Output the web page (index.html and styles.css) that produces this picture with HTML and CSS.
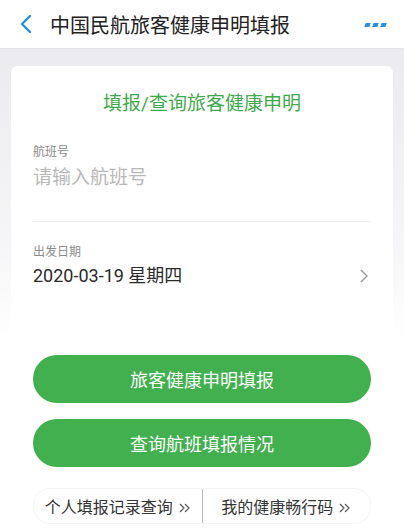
FILE: index.html
```html
<!DOCTYPE html>
<html>
<head>
    <meta charset="utf-8">
    <title>中国民航旅客健康申明填报</title>
    <link rel="stylesheet" href="styles.css">
</head>
<body>
    <div class="header">
        <svg class="back" width="14" height="20" viewBox="0 0 14 20">
            <path d="M11 2 L3 10 L11 18" fill="none" stroke="#2b8fd8" stroke-width="2.4" stroke-linecap="round" stroke-linejoin="round"/>
        </svg>
        <div class="header-title">中国民航旅客健康申明填报</div>
        <div class="more">
            <span></span><span></span><span></span>
        </div>
    </div>
    <div class="page">
        <div class="card">
            <div class="card-title">填报/查询旅客健康申明</div>
            <div class="field">
                <div class="label">航班号</div>
                <div class="placeholder">请输入航班号</div>
            </div>
            <div class="field field-date">
                <div>
                    <div class="label">出发日期</div>
                    <div class="value">2020-03-19 星期四</div>
                </div>
                <svg class="arrow" width="10" height="16" viewBox="0 0 10 16">
                    <path d="M2 2 L8 8 L2 14" fill="none" stroke="#999" stroke-width="1.4"/>
                </svg>
            </div>
        </div>
        <div class="actions">
            <button class="btn">旅客健康申明填报</button>
            <button class="btn">查询航班填报情况</button>
        </div>
        <div class="links">
            <div class="link">个人填报记录查询
                <svg class="dbl" width="12" height="10" viewBox="0 0 12 10">
                    <path d="M1 1 L5 5 L1 9 M6 1 L10 5 L6 9" fill="none" stroke="#555" stroke-width="1.2"/>
                </svg>
            </div>
            <div class="sep"></div>
            <div class="link">我的健康畅行码
                <svg class="dbl" width="12" height="10" viewBox="0 0 12 10">
                    <path d="M1 1 L5 5 L1 9 M6 1 L10 5 L6 9" fill="none" stroke="#555" stroke-width="1.2"/>
                </svg>
            </div>
        </div>
    </div>
</body>
</html>
```

FILE: styles.css
```css
body {
    margin: 0;
    padding: 0;
    font-family: Roboto, "Noto Sans CJK SC", sans-serif;
    background-color: #fff;
    color: #222;
}

.header {
    display: flex;
    align-items: center;
    height: 48px;
    padding: 0 18px 0 19px;
    background-color: #fff;
    border-bottom: 1px solid #e4e4e8;
}

.back {
    margin-right: 17px;
}

.header-title {
    flex: 1;
    font-size: 20px;
    color: #222;
}

.more {
    display: flex;
    gap: 3px;
    margin-top: 2px;
}

.more span {
    width: 5px;
    height: 4px;
    background-color: #2b8fd8;
    transform: skewX(-20deg);
}

.page {
    background: linear-gradient(to bottom, #ebebef 0px, #f6f6f8 200px, #fff 290px);
    padding: 17px 11px 0 11px;
}

.card {
    background-color: #fff;
    border-radius: 7px;
    padding: 0 22px;
    height: 269px;
}

.card-title {
    text-align: center;
    color: #3fa94c;
    font-size: 19px;
    padding-top: 22px;
    height: 36px;
}

.field {
    padding: 19px 0 26px 0;
    border-bottom: 1px solid #f0f0f0;
}

.field-date {
    display: flex;
    justify-content: space-between;
    align-items: center;
    border-bottom: none;
    padding-top: 21px;
}

.label {
    font-size: 12px;
    color: #8a8a8a;
    line-height: 18px;
}

.placeholder {
    font-size: 19px;
    color: #b8b8b8;
    line-height: 34px;
}

.value {
    font-size: 18px;
    color: #2a2a2a;
    line-height: 30px;
}

.arrow {
    margin-top: 18px;
    margin-right: 2px;
}

.actions {
    display: flex;
    flex-direction: column;
    gap: 16px;
    padding: 20px 22px 0 22px;
}

.btn {
    height: 48px;
    border: none;
    border-radius: 24px;
    background-color: #42b04e;
    color: #fff;
    font-family: Roboto, "Noto Sans CJK SC", sans-serif;
    font-size: 18px;
}

.links {
    display: flex;
    align-items: center;
    margin: 21px 22px 0 22px;
    height: 34px;
    border: 1px solid #f4f4f4;
    border-radius: 17px;
    font-size: 16px;
    color: #333;
}

.link {
    flex: 1;
    text-align: center;
}

.dbl {
    margin-left: 2px;
}

.sep {
    width: 1px;
    height: 34px;
    background-color: #bbb;
}
```
